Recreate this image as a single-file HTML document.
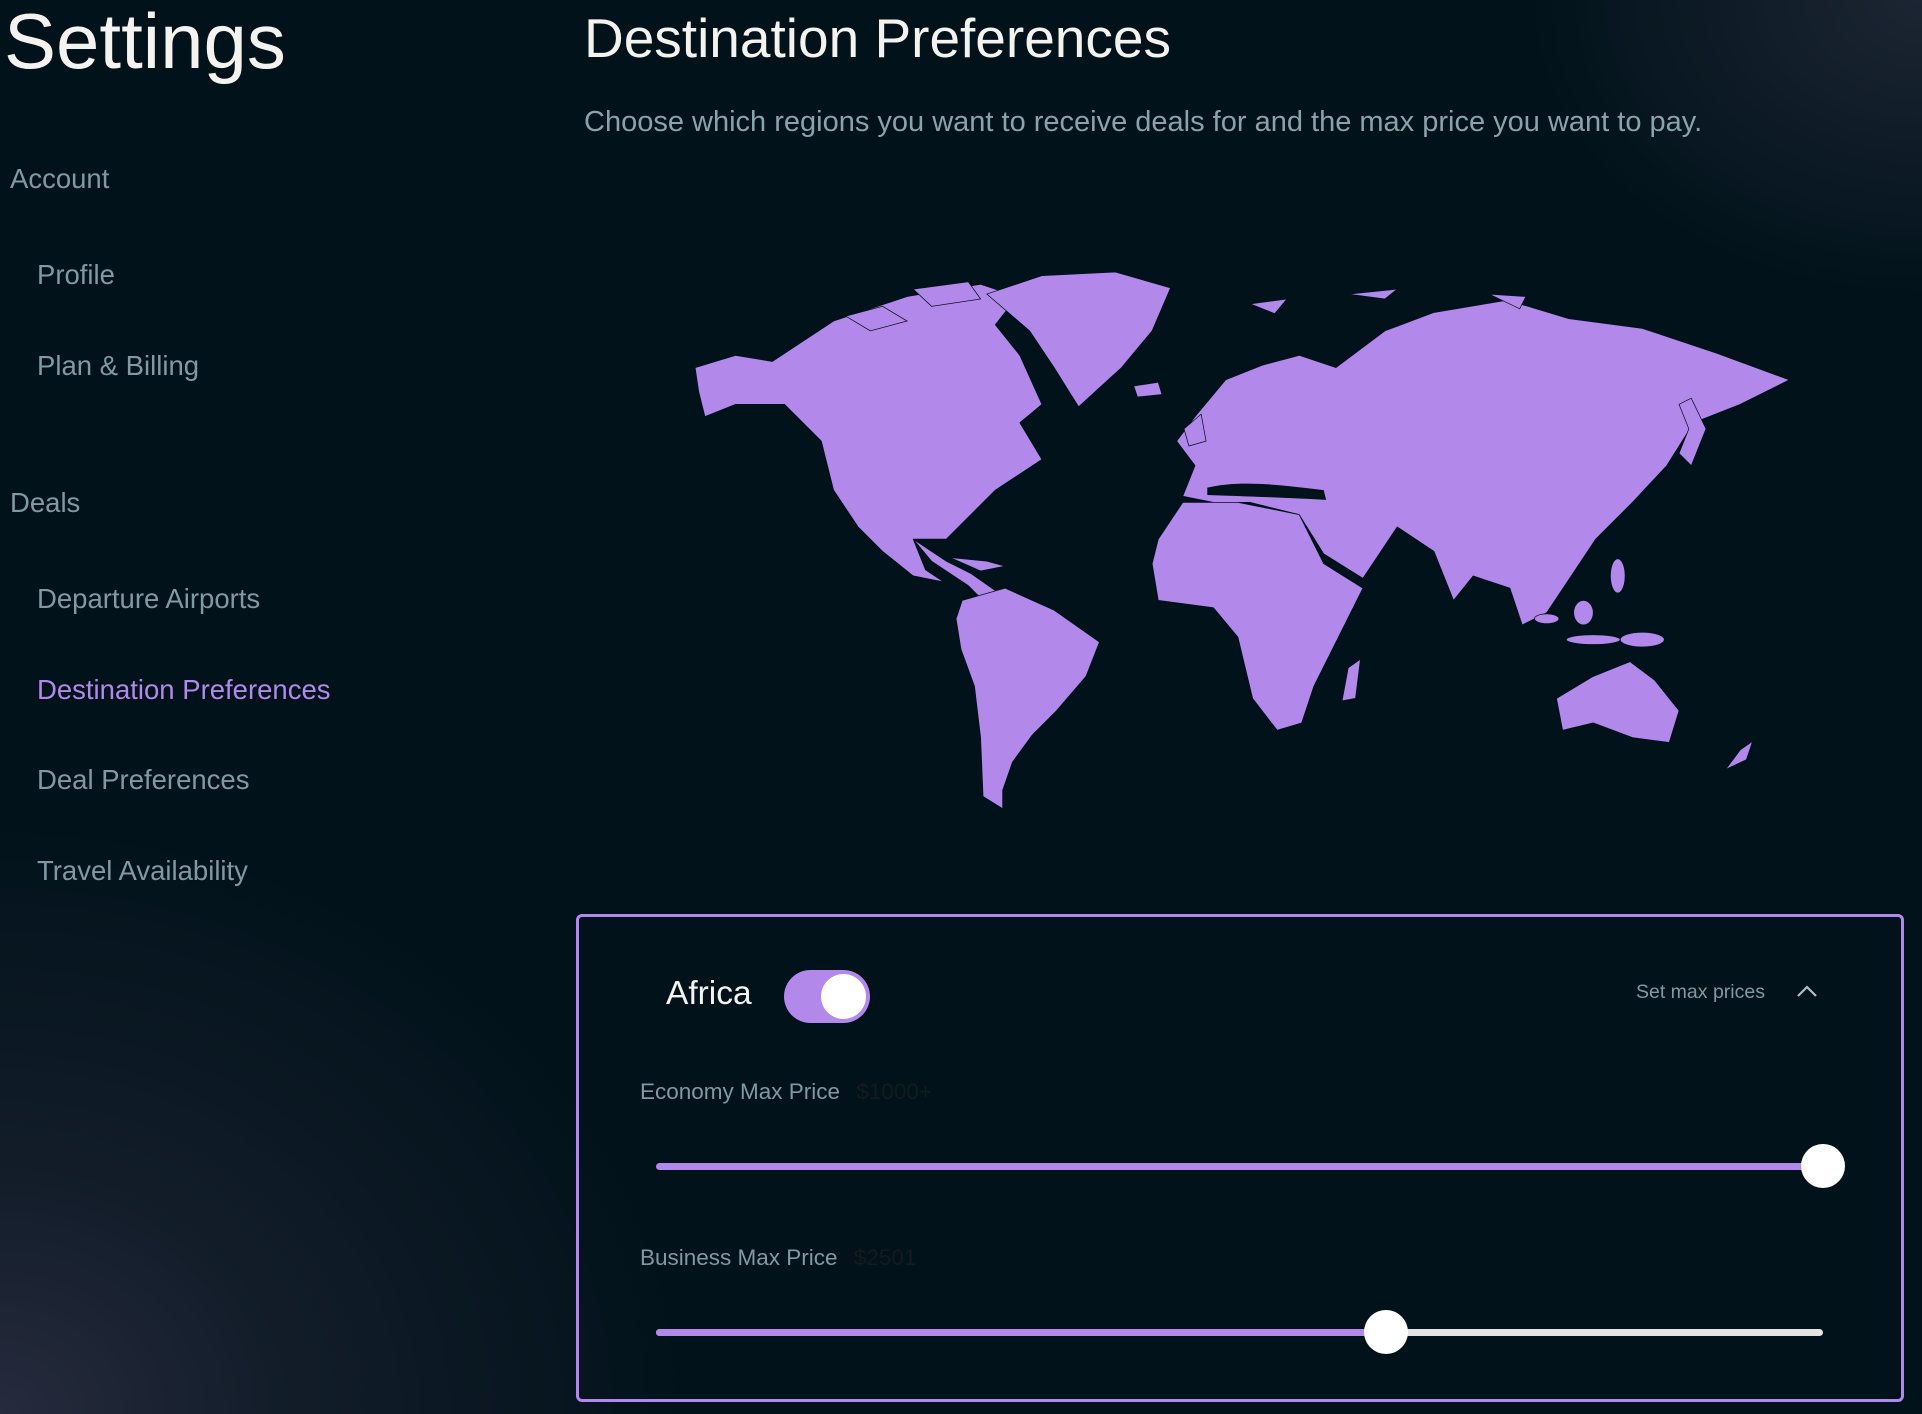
<!DOCTYPE html>
<html><head><meta charset="utf-8"><style>
*{margin:0;padding:0;box-sizing:border-box}
body{width:1922px;height:1414px;overflow:hidden;position:relative;font-family:"Liberation Sans",sans-serif;
background:radial-gradient(ellipse 700px 600px at 0% 100%,#262b3d 0%,rgba(30,36,52,0.6) 40%,rgba(1,18,26,0) 100%),radial-gradient(ellipse 400px 300px at 100% 0%,#1c2533 0%,rgba(1,18,26,0) 100%),#01121a}
.t{position:absolute;white-space:nowrap;line-height:1}
.nav{color:#7f9aa3;font-size:27.5px}
</style></head><body>
<div class="t" style="left:4px;top:2px;font-size:78px;color:#f5f3ef">Settings</div>
<div class="t" style="left:584px;top:11px;font-size:55px;color:#f5f3ef">Destination Preferences</div>
<div class="t" style="left:584px;top:108px;font-size:29px;color:#8aa2aa">Choose which regions you want to receive deals for and the max price you want to pay.</div>
<div class="t nav" style="left:10px;top:165px">Account</div>
<div class="t nav" style="left:37px;top:261px">Profile</div>
<div class="t nav" style="left:37px;top:352px">Plan &amp; Billing</div>
<div class="t nav" style="left:10px;top:489px">Deals</div>
<div class="t nav" style="left:37px;top:585px">Departure Airports</div>
<div class="t nav" style="left:37px;top:676px;color:#b388eb">Destination Preferences</div>
<div class="t nav" style="left:37px;top:766px">Deal Preferences</div>
<div class="t nav" style="left:37px;top:857px">Travel Availability</div>

<svg style="position:absolute;left:0;top:0" width="1922" height="1414" viewBox="0 0 1568 1154">
<g fill="#b388eb" stroke="#01121a" stroke-width="0.6">
<polygon points="567,300 600,290 630,295 680,262 740,242 800,232 830,242 812,265 832,290 850,330 832,345 850,375 812,400 792,420 772,440 745,440 755,465 770,475 745,470 720,450 700,430 680,400 670,360 640,330 600,330 575,340 570,320"/>
<polygon points="690,258 720,250 740,262 710,270"/><polygon points="745,236 790,230 800,244 760,250"/>
<polygon points="805,240 850,225 910,222 955,235 940,270 915,300 880,332 860,300 840,270"/>
<polygon points="745,440 760,458 790,478 802,490 812,482 792,468 772,458"/>
<polygon points="775,455 805,458 820,462 800,466"/>
<polygon points="785,490 820,480 860,498 897,524 886,552 862,580 842,600 826,622 818,645 818,660 802,650 800,602 795,560 784,530 780,505"/>
<polygon points="960,360 975,340 1000,310 1030,298 1060,290 1090,300 1130,270 1170,255 1230,245 1280,260 1340,268 1400,288 1460,310 1420,330 1382,345 1360,380 1332,410 1302,440 1282,470 1262,500 1242,510 1232,480 1202,470 1186,490 1170,450 1140,430 1112,472 1080,452 1060,420 1020,410 990,410 965,405 975,380"/>
<polygon points="966,350 980,338 984,360 970,364"/><polygon points="925,315 945,312 948,322 928,324"/>
<polygon points="1370,330 1380,325 1392,350 1380,380 1370,370 1378,350"/>
<polygon points="945,440 965,410 1010,410 1060,420 1080,460 1112,480 1092,520 1072,560 1062,590 1042,596 1022,570 1010,520 990,496 945,490 940,460"/>
<polygon points="1100,545 1110,538 1106,570 1095,572"/>
<polygon points="1270,570 1300,552 1330,540 1350,555 1370,580 1362,606 1332,602 1300,590 1275,596"/>
<ellipse cx="1262" cy="505" rx="10" ry="4"/><ellipse cx="1292" cy="500" rx="8" ry="10"/><ellipse cx="1300" cy="522" rx="22" ry="4"/><ellipse cx="1340" cy="522" rx="18" ry="6"/><ellipse cx="1320" cy="470" rx="6" ry="14"/>
<polygon points="1408,628 1420,612 1430,605 1425,620"/>
<polygon points="1020,248 1050,244 1040,256"/><polygon points="1100,240 1140,236 1130,244"/><polygon points="1215,240 1245,242 1240,252"/>
</g>
<path d="M985,398 C1010,392 1040,395 1080,400 L1082,408 C1050,406 1010,405 985,404 Z" fill="#01121a"/>
</svg>

<div style="position:absolute;left:576px;top:914px;width:1328px;height:488px;border:3px solid #b388eb;border-radius:6px"></div>
<div class="t" style="left:666px;top:977px;font-size:33.5px;color:#f5f3ef">Africa</div>
<div style="position:absolute;left:784px;top:970px;width:86px;height:53px;border-radius:27px;background:#b388eb"><div style="position:absolute;right:4px;top:4px;width:45px;height:45px;border-radius:50%;background:#fff"></div></div>
<div class="t" style="left:1636px;top:983px;font-size:19.5px;color:#7f9aa3">Set max prices</div>
<svg style="position:absolute;left:1796px;top:983px" width="22" height="16"><polyline points="2,13 11,4 20,13" fill="none" stroke="#b0bfc4" stroke-width="2.2"/></svg>
<div class="t" style="left:640px;top:1081px;font-size:22.5px;color:#7f9aa3">Economy Max Price <span style="color:#141a1e;margin-left:10px">$1000+</span></div>
<div style="position:absolute;left:656px;top:1163px;width:1167px;height:7px;border-radius:4px;background:#b388eb"></div>
<div style="position:absolute;left:1801px;top:1144px;width:44px;height:44px;border-radius:50%;background:#fff"></div>
<div class="t" style="left:640px;top:1247px;font-size:22.5px;color:#7f9aa3">Business Max Price <span style="color:#141a1e;margin-left:10px">$2501</span></div>
<div style="position:absolute;left:656px;top:1329px;width:1167px;height:7px;border-radius:4px;background:#e4e4e4"></div>
<div style="position:absolute;left:656px;top:1329px;width:730px;height:7px;border-radius:4px;background:#b388eb"></div>
<div style="position:absolute;left:1364px;top:1310px;width:44px;height:44px;border-radius:50%;background:#fff"></div>
</body></html>
